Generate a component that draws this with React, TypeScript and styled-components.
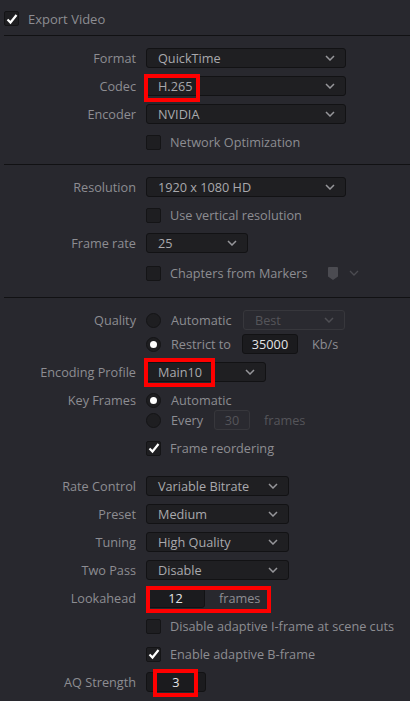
import React from "react";
import styled, { createGlobalStyle } from "styled-components";

const Global = createGlobalStyle`
  html, body { margin: 0; padding: 0; background: #28282e; }
  body { font-family: "Open Sans", "Noto Sans", sans-serif; font-size: 12.7px; }
  * { box-sizing: border-box; }
`;

const Panel = styled.div`
  width: 410px;
  height: 701px;
  overflow: hidden;
  background: #28282e;
  color: #8d8d92;
`;

const Header = styled.div`
  height: 35px;
  display: flex;
  align-items: center;
  gap: 9px;
  padding-left: 4px;
  padding-top: 2px;
  font-size: 13px;
  color: #8d8d92;
`;

const Divider = styled.div`
  height: 1px;
  margin-left: 4px;
  background: #111113;
`;

const Section = styled.div<{ $pt: number; $pb: number }>`
  padding-top: ${(p) => p.$pt}px;
  padding-bottom: ${(p) => p.$pb}px;
`;

const Row = styled.div<{ $h?: number; $mt?: number }>`
  display: grid;
  grid-template-columns: 136px 1fr;
  column-gap: 10px;
  align-items: center;
  height: ${(p) => p.$h ?? 28}px;
  margin-top: ${(p) => p.$mt ?? 0}px;
`;

const Label = styled.div`
  text-align: right;
  white-space: nowrap;
  color: #8d8d92;
`;

const Control = styled.div`
  position: relative;
  display: flex;
  align-items: center;
  height: 100%;
`;

const SelectBox = styled.div<{ $w: number; $disabled?: boolean }>`
  width: ${(p) => p.$w}px;
  height: 20px;
  display: flex;
  align-items: center;
  justify-content: space-between;
  padding: 0 10px 0 11px;
  border-radius: 3px;
  background: ${(p) => (p.$disabled ? "#2a2a30" : "#1f1f22")};
  border: 1px solid ${(p) => (p.$disabled ? "#37373c" : "#121214")};
  color: ${(p) => (p.$disabled ? "#55555a" : "#a9a9ad")};
  white-space: nowrap;
`;

const Chevron = ({ color }: { color: string }) => (
  <svg width="10" height="6" viewBox="0 0 10 6">
    <polyline points="1,1 5,5 9,1" fill="none" stroke={color} strokeWidth="1.5" />
  </svg>
);

const Select = ({ w, value, disabled }: { w: number; value: string; disabled?: boolean }) => (
  <SelectBox $w={w} $disabled={disabled}>
    <span>{value}</span>
    <Chevron color={disabled ? "#4e4e53" : "#96969a"} />
  </SelectBox>
);

const InputBox = styled.div<{ $w: number; $disabled?: boolean }>`
  width: ${(p) => p.$w}px;
  height: 20px;
  display: flex;
  align-items: center;
  justify-content: center;
  border-radius: 3px;
  background: ${(p) => (p.$disabled ? "#2a2a30" : "#1b1b1e")};
  border: 1px solid ${(p) => (p.$disabled ? "#37373c" : "#121214")};
  color: ${(p) => (p.$disabled ? "#55555a" : "#e4e4e6")};
`;

const Unit = styled.span<{ $ml: number; $dim?: boolean }>`
  margin-left: ${(p) => p.$ml}px;
  color: ${(p) => (p.$dim ? "#55555a" : "#8d8d92")};
`;

const Box = styled.div`
  width: 15px;
  height: 15px;
  flex: none;
  border-radius: 2px;
  background: #1e1e21;
  border: 1px solid #141416;
  display: flex;
  align-items: center;
  justify-content: center;
`;

const Check = ({ checked }: { checked?: boolean }) => (
  <Box>
    {checked && (
      <svg width="12" height="12" viewBox="0 0 12 12">
        <polyline points="1.5,6.5 4.5,9.5 10.5,2" fill="none" stroke="#ffffff" strokeWidth="2.2" />
      </svg>
    )}
  </Box>
);

const CheckLabel = styled.span`
  margin-left: 9px;
  color: #8d8d92;
  white-space: nowrap;
`;

const RadioCircle = styled.div`
  width: 15px;
  height: 15px;
  flex: none;
  border-radius: 50%;
  background: #1e1e21;
  border: 1px solid #141416;
  display: flex;
  align-items: center;
  justify-content: center;
`;

const Dot = styled.div`
  width: 7px;
  height: 7px;
  border-radius: 50%;
  background: #ffffff;
`;

const RadioLabel = styled.span<{ $w: number }>`
  margin-left: 10px;
  width: ${(p) => p.$w}px;
  color: #8d8d92;
  white-space: nowrap;
`;

const Radio = ({ on }: { on?: boolean }) => <RadioCircle>{on && <Dot />}</RadioCircle>;

const Highlight = styled.div<{ $l: number; $t: number; $w: number; $h: number }>`
  position: absolute;
  left: ${(p) => p.$l}px;
  top: ${(p) => p.$t}px;
  width: ${(p) => p.$w}px;
  height: ${(p) => p.$h}px;
  border: 4px solid #ff0000;
  pointer-events: none;
`;

const MarkerIcon = styled.svg`
  margin-left: 20px;
`;

const SmallChevron = styled.svg`
  margin-left: 11px;
`;

export default function App() {
  return (
    <Panel>
      <Global />
      <Header>
        <Check checked />
        <span>Export Video</span>
      </Header>
      <Divider />
      <Section $pt={8} $pb={8}>
        <Row>
          <Label>Format</Label>
          <Control><Select w={200} value="QuickTime" /></Control>
        </Row>
        <Row>
          <Label>Codec</Label>
          <Control>
            <Select w={200} value="H.265" />
            <Highlight $l={-2} $t={2} $w={56} $h={28} />
          </Control>
        </Row>
        <Row>
          <Label>Encoder</Label>
          <Control><Select w={200} value="NVIDIA" /></Control>
        </Row>
        <Row>
          <Label />
          <Control><Check /><CheckLabel>Network Optimization</CheckLabel></Control>
        </Row>
      </Section>
      <Divider />
      <Section $pt={8} $pb={10}>
        <Row>
          <Label>Resolution</Label>
          <Control><Select w={200} value="1920 x 1080 HD" /></Control>
        </Row>
        <Row>
          <Label />
          <Control><Check /><CheckLabel>Use vertical resolution</CheckLabel></Control>
        </Row>
        <Row>
          <Label>Frame rate</Label>
          <Control><Select w={102} value="25" /></Control>
        </Row>
        <Row $mt={2}>
          <Label />
          <Control>
            <Check />
            <CheckLabel>Chapters from Markers</CheckLabel>
            <MarkerIcon width="10" height="13" viewBox="0 0 10 13">
              <path d="M1 0 H9 A1 1 0 0 1 10 1 V9.5 L5 13 L0 9.5 V1 A1 1 0 0 1 1 0 Z" fill="#4b4b51" />
            </MarkerIcon>
            <SmallChevron width="10" height="6" viewBox="0 0 10 6">
              <polyline points="1,1 5,5 9,1" fill="none" stroke="#4b4b51" strokeWidth="1.3" />
            </SmallChevron>
          </Control>
        </Row>
      </Section>
      <Divider />
      <Section $pt={10} $pb={0}>
        <Row $h={24}>
          <Label>Quality</Label>
          <Control>
            <Radio />
            <RadioLabel $w={72}>Automatic</RadioLabel>
            <Select w={102} value="Best" disabled />
          </Control>
        </Row>
        <Row $h={24}>
          <Label />
          <Control>
            <Radio on />
            <RadioLabel $w={71}>Restrict to</RadioLabel>
            <InputBox $w={56}>35000</InputBox>
            <Unit $ml={14}>Kb/s</Unit>
          </Control>
        </Row>
        <Row $mt={2}>
          <Label>Encoding Profile</Label>
          <Control>
            <Select w={120} value="Main10" />
            <Highlight $l={-2} $t={0} $w={71} $h={29} />
          </Control>
        </Row>
        <Row $h={20} $mt={4}>
          <Label>Key Frames</Label>
          <Control><Radio on /><RadioLabel $w={60}>Automatic</RadioLabel></Control>
        </Row>
        <Row $h={20}>
          <Label />
          <Control>
            <Radio />
            <RadioLabel $w={43}>Every</RadioLabel>
            <InputBox $w={36} $disabled>30</InputBox>
            <Unit $ml={14} $dim>frames</Unit>
          </Control>
        </Row>
        <Row $mt={4}>
          <Label />
          <Control><Check checked /><CheckLabel>Frame reordering</CheckLabel></Control>
        </Row>
        <Row $mt={10}>
          <Label>Rate Control</Label>
          <Control><Select w={143} value="Variable Bitrate" /></Control>
        </Row>
        <Row>
          <Label>Preset</Label>
          <Control><Select w={143} value="Medium" /></Control>
        </Row>
        <Row>
          <Label>Tuning</Label>
          <Control><Select w={143} value="High Quality" /></Control>
        </Row>
        <Row>
          <Label>Two Pass</Label>
          <Control><Select w={143} value="Disable" /></Control>
        </Row>
        <Row>
          <Label>Lookahead</Label>
          <Control>
            <InputBox $w={59}>12</InputBox>
            <Unit $ml={14}>frames</Unit>
            <Highlight $l={0} $t={2} $w={125} $h={27} />
          </Control>
        </Row>
        <Row>
          <Label />
          <Control><Check /><CheckLabel>Disable adaptive I-frame at scene cuts</CheckLabel></Control>
        </Row>
        <Row>
          <Label />
          <Control><Check checked /><CheckLabel>Enable adaptive B-frame</CheckLabel></Control>
        </Row>
        <Row>
          <Label>AQ Strength</Label>
          <Control>
            <InputBox $w={60}>3</InputBox>
            <Highlight $l={7} $t={1} $w={45} $h={28} />
          </Control>
        </Row>
      </Section>
    </Panel>
  );
}
